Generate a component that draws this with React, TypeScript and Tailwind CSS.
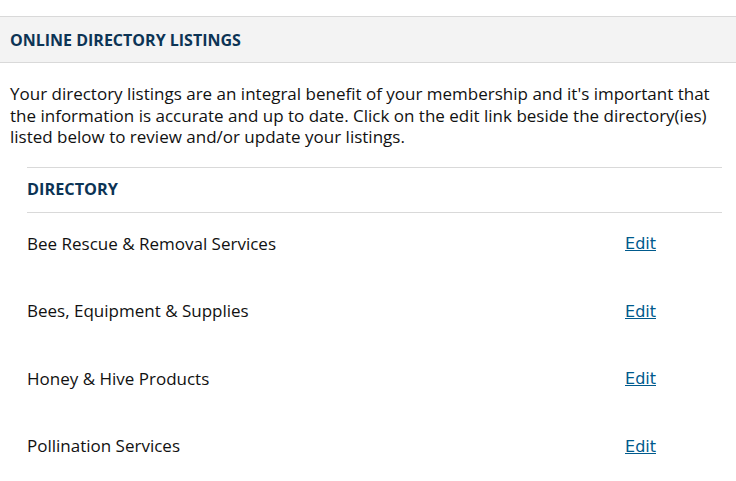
import React from "react";

const rows = [
  "Bee Rescue & Removal Services",
  "Bees, Equipment & Supplies",
  "Honey & Hive Products",
  "Pollination Services",
];

export default function App() {
  return (
    <div className="w-[736px] h-[481px] bg-white overflow-hidden" style={{ fontFamily: '"Open Sans", sans-serif' }}>
      <div className="h-4" />
      <div className="h-[47px] border-y border-[#d9d9d9] bg-[#f3f3f3] flex items-center px-[10px]">
        <h2 className="text-[16px] font-bold text-[#0c3455]">ONLINE DIRECTORY LISTINGS</h2>
      </div>
      <p className="px-[10px] pt-[20px] text-[17px] leading-[21.5px] text-[#111]">
        Your directory listings are an integral benefit of your membership and it's important that the information is accurate and up to date. Click on the edit link beside the directory(ies) listed below to review and/or update your listings.
      </p>
      <div className="ml-[27px] mr-[14px] mt-[19px]">
        <div className="h-[46px] border-y border-[#d9d9d9] flex items-center">
          <span className="text-[16.3px] font-bold text-[#0c3455]">DIRECTORY</span>
        </div>
        {rows.map((r) => (
          <div key={r} className="h-[67.5px] flex items-center justify-between pb-1">
            <span className="text-[17px] text-[#111] -mt-[2px]">{r}</span>
            <a href="#" className="mr-[66px] text-[16px] text-[#005a8c] underline" style={{ fontFamily: '"DejaVu Sans", sans-serif' }}>Edit</a>
          </div>
        ))}
      </div>
    </div>
  );
}
